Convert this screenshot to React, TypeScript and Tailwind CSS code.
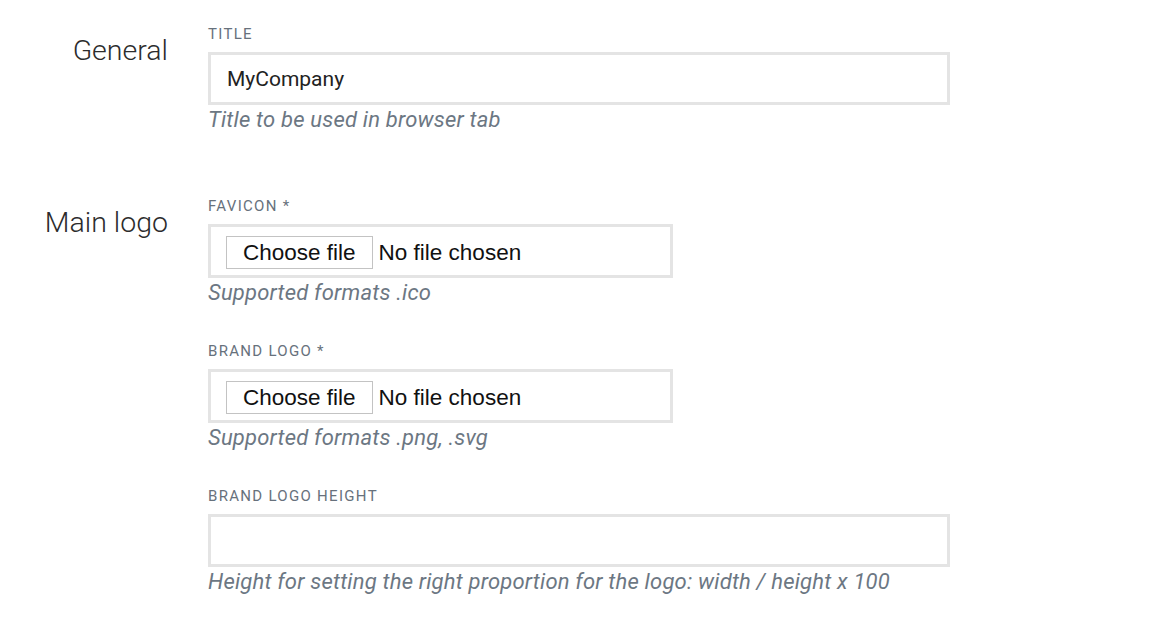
import React from 'react';

const font = { fontFamily: 'Roboto, "Liberation Sans", sans-serif' };

function FieldLabel({ children }: { children: React.ReactNode }) {
  return (
    <div className="mb-2 text-[15px] leading-5 uppercase tracking-[1.3px] text-[#67717c]">
      {children}
    </div>
  );
}

function Help({ children }: { children: React.ReactNode }) {
  return (
    <div className="mt-px text-[22px] leading-7 italic tracking-[0.2px] text-[#6c7783]">{children}</div>
  );
}

function TextField({ label, value, help }: { label: string; value?: string; help: string }) {
  return (
    <div>
      <FieldLabel>{label}</FieldLabel>
      <input
        type="text"
        defaultValue={value}
        className="block h-[53px] w-[742px] border-[3px] border-[#e4e4e4] bg-white px-4 text-[21px] text-[#222] outline-none"
        style={font}
      />
      <Help>{help}</Help>
    </div>
  );
}

function FileField({ label, help }: { label: string; help: string }) {
  return (
    <div>
      <FieldLabel>{label}</FieldLabel>
      <div className="flex h-[54px] w-[465px] items-start border-[3px] border-[#e4e4e4] bg-white pl-[15px] pt-[9px]">
        <div
          className="flex h-[33px] items-center gap-[6px] text-[22.5px] text-[#111]"
          style={{ fontFamily: '"Liberation Sans", Arial, sans-serif' }}
        >
          <button
            type="button"
            className="flex h-[33px] items-center border border-[#c3c3c3] bg-white px-[16px] text-[22.5px] text-[#111]"
          >
            Choose file
          </button>
          <span>No file chosen</span>
        </div>
      </div>
      <Help>{help}</Help>
    </div>
  );
}

function Section({ title, children }: { title: string; children: React.ReactNode }) {
  return (
    <div className="flex gap-10">
      <div className="w-[168px] shrink-0 pt-[11px] text-right text-[28.5px] leading-8 font-light text-[#2c2c2c]">
        {title}
      </div>
      <div className="flex flex-col gap-[34px]">{children}</div>
    </div>
  );
}

export default function App() {
  return (
    <div className="min-h-[638px] w-[1166px] bg-white pt-6" style={font}>
      <div className="flex flex-col gap-[62px]">
        <Section title="General">
          <TextField label="Title" value="MyCompany" help="Title to be used in browser tab" />
        </Section>
        <Section title="Main logo">
          <FileField label="Favicon *" help="Supported formats .ico" />
          <FileField label="Brand logo *" help="Supported formats .png, .svg" />
          <TextField
            label="Brand logo height"
            help="Height for setting the right proportion for the logo: width / height x 100"
          />
        </Section>
      </div>
    </div>
  );
}
